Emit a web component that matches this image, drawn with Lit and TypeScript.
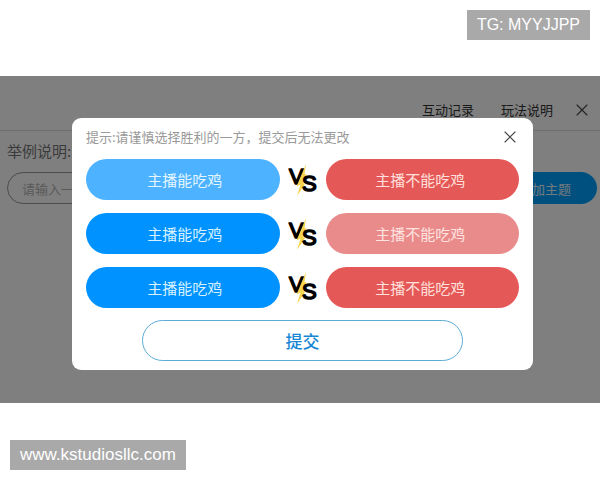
import { LitElement, html, css, svg } from "lit";
import { customElement, property, state } from "lit/decorators.js";
import { classMap } from "lit/directives/class-map.js";

type Side = "blue" | "red";

const closeIcon = svg`
  <path d="M1 1 L11 11 M11 1 L1 11" fill="none" stroke="currentColor" stroke-width="1.1" stroke-linecap="round" />
`;

@customElement("vs-row")
export class VsRow extends LitElement {
  @property() winner: Side | "" = "";
  @property() left = "";
  @property() right = "";

  static styles = css`
    :host {
      display: grid;
      grid-template-columns: 1fr 46px 1fr;
      align-items: center;
    }
    .side {
      height: 41px;
      border: 0;
      border-radius: 21px;
      padding: 0;
      font: inherit;
      font-size: 15px;
      line-height: 24px;
      cursor: pointer;
    }
    .blue {
      padding-left: 4px;
      background: #0093ff;
      color: #d8f1ff;
    }
    .red {
      padding-right: 4px;
      background: #e55858;
      color: #ffe0dc;
    }
    .blue.picked {
      background: #4db2ff;
      color: #e4f6ff;
    }
    .red.picked {
      background: #e98b8b;
      color: #ffe3e0;
    }
    .vs {
      justify-self: center;
      display: block;
    }
    .letter {
      font: 22px "Liberation Sans", sans-serif;
      fill: #000;
      stroke: #000;
      stroke-width: 1.6;
      stroke-linejoin: round;
    }
  `;

  private pick(side: Side) {
    this.winner = side;
  }

  render() {
    return html`
      <button
        class=${classMap({ side: true, blue: true, picked: this.winner === "blue" })}
        @click=${() => this.pick("blue")}
      >${this.left}</button>
      <svg class="vs" width="30" height="36" viewBox="0 0 30 36">
        <text class="letter" x="1" y="22">V</text>
        <path d="M18 2 L12.5 15 L8.5 24.5 L12.5 22.5 L9 34 L17 22 L15 21 L18.5 12 L16.5 12.5 Z" fill="#f4d44c" />
        <text class="letter" x="14" y="29">S</text>
      </svg>
      <button
        class=${classMap({ side: true, red: true, picked: this.winner === "red" })}
        @click=${() => this.pick("red")}
      >${this.right}</button>
    `;
  }
}

@customElement("app-root")
export class AppRoot extends LitElement {
  @state() private rounds: (Side | "")[] = ["blue", "red", ""];

  static styles = css`
    :host {
      display: block;
      background: #fff;
      font-family: "Noto Sans CJK SC", sans-serif;
    }
    .strip {
      display: flex;
      padding: 10px;
      font: 17px/30px "Liberation Sans", sans-serif;
    }
    .top {
      justify-content: flex-end;
      padding-bottom: 36px;
      font-size: 16px;
    }
    .bottom {
      padding-top: 37px;
    }
    .mark {
      padding: 0 10px;
      background: #a9a9a9;
      color: #fff;
    }
    .stage {
      display: grid;
    }
    .page,
    .shade {
      grid-area: 1 / 1;
    }
    .page {
      background: #fff;
      color: #333;
    }
    .bar {
      display: flex;
      justify-content: flex-end;
      align-items: center;
      gap: 27px;
      padding: 14px 12px 0 0;
      height: 40px;
      border-bottom: 1px solid #ddd;
      font-size: 13px;
      line-height: 20px;
    }
    .bar a {
      color: #333;
      text-decoration: none;
    }
    .close {
      display: block;
      border: 0;
      padding: 0;
      background: none;
      color: #444;
      cursor: pointer;
    }
    .close svg {
      display: block;
    }
    .bar .close {
      margin-left: -4px;
    }
    .form {
      display: grid;
      grid-template-columns: 1fr 104px;
      gap: 9px 12px;
      padding: 8px 3px 0 7px;
    }
    .label {
      grid-column: 1 / -1;
      font-size: 15px;
      line-height: 24px;
      color: #777;
    }
    .topic {
      box-sizing: border-box;
      height: 32px;
      border: 1px solid #999;
      border-radius: 16px;
      padding: 0 14px;
      background: none;
      font: inherit;
      font-size: 13px;
      min-width: 0;
    }
    .topic::placeholder {
      color: #b4b4b4;
      opacity: 1;
    }
    .add {
      height: 32px;
      border: 0;
      border-radius: 16px;
      padding: 0 26px 0 0;
      background: #00a0ff;
      color: #e4f2fb;
      font: inherit;
      font-size: 13px;
      text-align: right;
    }
    .shade {
      z-index: 1;
      padding: 42px 67px 33px 72px;
      background: rgba(0, 0, 0, 0.5);
    }
    .dialog {
      display: flex;
      flex-direction: column;
      gap: 12px;
      padding: 9px 14px;
      border-radius: 9px;
      background: #fff;
    }
    .rows {
      display: grid;
      gap: 13px;
    }
    .head {
      display: flex;
      justify-content: space-between;
      align-items: center;
      height: 20px;
      padding-right: 3px;
    }
    .tip {
      margin: 0;
      font-size: 13px;
      font-weight: 400;
      line-height: 20px;
      color: #999;
    }
    .submit {
      align-self: center;
      width: 74%;
      height: 41px;
      border: 1px solid #5cacd6;
      border-radius: 21px;
      padding: 0;
      background: #fff;
      color: #1787d4;
      font: inherit;
      font-size: 17px;
      font-weight: 500;
      line-height: 24px;
      cursor: pointer;
    }
  `;

  render() {
    return html`
      <div class="strip top"><span class="mark">TG: MYYJJPP</span></div>
      <main class="stage">
        <section class="page">
          <nav class="bar">
            <a href="#records">互动记录</a>
            <a href="#rules">玩法说明</a>
            <button class="close" aria-label="关闭">
              <svg width="12" height="12" viewBox="0 0 12 12">${closeIcon}</svg>
            </button>
          </nav>
          <div class="form">
            <label class="label" for="topic">举例说明:</label>
            <input class="topic" id="topic" type="text" placeholder="请输入一" />
            <button class="add">加主题</button>
          </div>
        </section>
        <div class="shade">
          <section class="dialog" role="dialog" aria-labelledby="tip">
            <header class="head">
              <h2 class="tip" id="tip">提示:请谨慎选择胜利的一方，提交后无法更改</h2>
              <button class="close" aria-label="关闭">
                <svg width="12" height="12" viewBox="0 0 12 12">${closeIcon}</svg>
              </button>
            </header>
            <div class="rows">
              ${this.rounds.map(
                (winner) => html`<vs-row .winner=${winner} left="主播能吃鸡" right="主播不能吃鸡"></vs-row>`
              )}
            </div>
            <button class="submit">提交</button>
          </section>
        </div>
      </main>
      <div class="strip bottom"><span class="mark">www.kstudiosllc.com</span></div>
    `;
  }
}
